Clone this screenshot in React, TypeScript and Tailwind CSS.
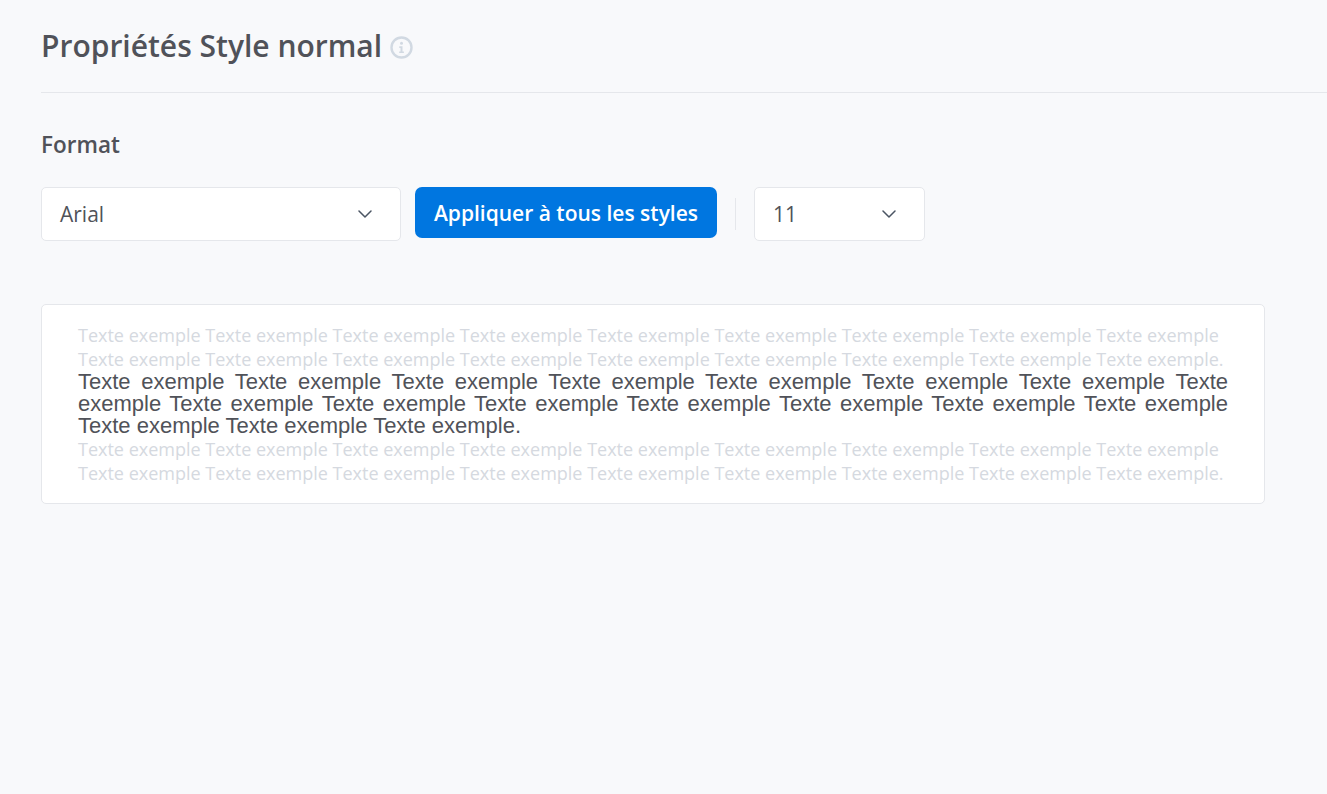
import React from "react";

const sample = (n: number) => Array(n).fill("Texte exemple").join(" ") + ".";

function Chevron() {
  return (
    <svg width="14" height="8" viewBox="0 0 14 8" fill="none" stroke="#4b5563" strokeWidth="1.5" strokeLinecap="round" strokeLinejoin="round">
      <path d="M1 1l6 6 6-6" />
    </svg>
  );
}

export default function App() {
  return (
    <div className="min-h-[794px] bg-[#f8f9fb] pl-[41px] font-['Open_Sans',sans-serif] text-[#505259] overflow-hidden">
      <div className="h-[93px] border-b border-[#e5e7eb] flex items-start pt-[25px]">
        <h1 className="text-[30px] leading-[42px] font-semibold">Propriétés Style normal</h1>
        <svg className="ml-[8px] mt-[11px]" width="23" height="23" viewBox="0 0 23 23" fill="none">
          <circle cx="11.5" cy="11.5" r="10" stroke="#d1d9e2" strokeWidth="2.4" />
          <circle cx="11.5" cy="7.2" r="1.5" fill="#d1d9e2" />
          <path d="M9.3 10.3h3.2v5.2h1.4v1.6H9.2v-1.6h1.3v-3.6H9.3z" fill="#d1d9e2" />
        </svg>
      </div>
      <h2 className="mt-[35px] text-[22.5px] leading-[33px] font-semibold">Format</h2>
      <div className="mt-[26px] flex items-start">
        <div className="w-[360px] h-[54px] bg-white border border-[#e5e7eb] rounded-[5px] flex items-center justify-between pl-[18px] pr-[28px] text-[21px]">
          <span className="pt-px">Arial</span>
          <Chevron />
        </div>
        <button className="ml-[14px] w-[302px] h-[51px] pt-[2px] bg-[#0076e0] rounded-[7px] text-white text-[21px] font-semibold">Appliquer à tous les styles</button>
        <div className="ml-[18px] mt-[11px] w-px h-[32px] bg-[#e5e7eb]" />
        <div className="ml-[18px] w-[171px] h-[54px] bg-white border border-[#e5e7eb] rounded-[5px] flex items-center justify-between pl-[18px] pr-[28px] text-[21px]">
          <span className="pt-px">11</span>
          <Chevron />
        </div>
      </div>
      <div className="mt-[63px] w-[1224px] h-[200px] bg-white border border-[#e5e7eb] rounded-[5px] pl-[36px] pr-[36px] pt-[18px]">
        <p className="text-[18px] leading-[24px] text-[#d5d9e0]">{sample(18)}</p>
        <p className="font-['Liberation_Sans',sans-serif] text-[22px] leading-[22px] text-justify text-[#505259]">{sample(18)}</p>
        <p className="text-[18px] leading-[24px] text-[#d5d9e0]">{sample(18)}</p>
      </div>
    </div>
  );
}
